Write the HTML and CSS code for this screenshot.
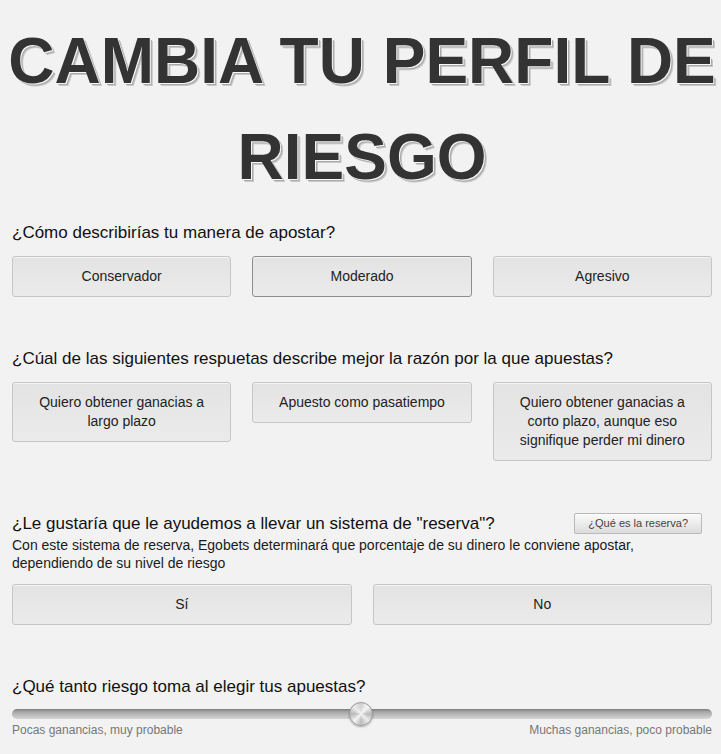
FILE: index.html
```html
<!DOCTYPE html>
<html lang="es">
  <head>
    <meta charset="UTF-8" />
    <meta name="viewport" content="width=device-width, initial-scale=1.0" />
    <title>Cambia tu perfil de riesgo</title>
    <link rel="stylesheet" href="styles.css">
  </head>
  <body>
    <div class="page">
      <h1>CAMBIA TU PERFIL DE RIESGO</h1>

      <!-- manera de apostar -->
      <div class="question">
        <h2>¿Cómo describirías tu manera de apostar?</h2>
        <div class="options">
          <button class="option">Conservador</button>
          <button class="option selected">Moderado</button>
          <button class="option">Agresivo</button>
        </div>
      </div>

      <!-- razón -->
      <div class="question">
        <h2>¿Cúal de las siguientes respuetas describe mejor la razón por la que apuestas?</h2>
        <div class="options">
          <button class="option">Quiero obtener ganacias a largo plazo</button>
          <button class="option">Apuesto como pasatiempo</button>
          <button class="option">Quiero obtener ganacias a corto plazo, aunque eso signifique perder mi dinero</button>
        </div>
      </div>

      <!-- reserva -->
      <div class="question">
        <div class="question-head">
          <h2>¿Le gustaría que le ayudemos a llevar un sistema de "reserva"?</h2>
          <button class="help-button">¿Qué es la reserva?</button>
        </div>
        <p class="note">Con este sistema de reserva, Egobets determinará que porcentaje de su dinero le conviene apostar, dependiendo de su nivel de riesgo</p>
        <div class="options two">
          <button class="option">Sí</button>
          <button class="option">No</button>
        </div>
      </div>

      <!-- riesgo -->
      <div class="question last">
        <h2>¿Qué tanto riesgo toma al elegir tus apuestas?</h2>
        <div class="slider">
          <div class="track"></div>
          <div class="thumb"></div>
        </div>
        <div class="scale-labels">
          <span>Pocas ganancias, muy probable</span>
          <span>Muchas ganancias, poco probable</span>
        </div>
      </div>
    </div>
  </body>
</html>
```

FILE: styles.css
```css
body {
  margin: 0;
  background: #f2f2f2;
  font-family: 'Liberation Sans', Arial, sans-serif;
  color: #1a1a1a;
}
.page {
  padding: 13px 9px 20px 12px;
}
h1 {
  margin: 0 -8px 18px;
  font-size: 64px;
  line-height: 96px;
  font-weight: bold;
  text-align: center;
  color: #333;
  text-shadow: 1px 1px 0 #f6f6f6, 2px 2px 0 #aaa, 3px 3px 0 #c8c8c8;
}
.question {
  margin-bottom: 52px;
}
.question h2 {
  margin: 0 0 13px;
  font-size: 17px;
  font-weight: normal;
  line-height: 20px;
  color: #111;
}
.question.last h2 {
  margin-bottom: 5px;
}
.options {
  display: grid;
  grid-template-columns: repeat(3, 1fr);
  gap: 21px;
  align-items: start;
}
.options.two {
  grid-template-columns: 1fr 1fr;
}
.option {
  font-family: 'Liberation Sans', Arial, sans-serif;
  font-size: 14px;
  line-height: 19px;
  padding: 10px 15px;
  border: 1px solid #c6c6c6;
  border-radius: 3px;
  background: linear-gradient(#e3e3e3, #ebebeb);
  box-shadow: inset 0 1px 0 #f4f4f4;
  color: #222;
  cursor: pointer;
}
.option.selected {
  border-color: #8e8e8e;
}
.question-head {
  display: flex;
  justify-content: space-between;
  align-items: center;
}
.question-head h2 {
  margin: 0;
}
.help-button {
  margin-right: 10px;
  padding: 3px 13px;
  font-family: 'Liberation Sans', Arial, sans-serif;
  font-size: 11px;
  line-height: 13px;
  color: #444;
  border: 1px solid #b9b9b9;
  border-radius: 2px;
  background: linear-gradient(#fbfbfb, #dcdcdc);
  cursor: pointer;
}
.note {
  margin: 2px 0 12px;
  font-size: 14px;
  line-height: 18px;
  color: #1a1a1a;
}
.slider {
  position: relative;
  display: flex;
  align-items: center;
  height: 24px;
}
.track {
  flex: 1;
  height: 10px;
  border-radius: 5px;
  background: linear-gradient(#7e7e7e, #a8a8a8 30%, #c2c2c2 70%, #d6d6d6);
}
.thumb {
  position: absolute;
  left: 50%;
  top: 0;
  width: 22px;
  height: 22px;
  margin-left: -13px;
  border-radius: 50%;
  border: 1px solid #9a9a9a;
  background:
    radial-gradient(circle, rgba(255,255,255,0.5) 0, rgba(255,255,255,0) 40%),
    conic-gradient(#d2d2d2, #f6f6f6 12%, #b9b9b9 25%, #ececec 37%, #bcbcbc 50%, #f4f4f4 62%, #b8b8b8 75%, #ebebeb 87%, #d2d2d2);
  box-shadow: 0 1px 2px rgba(0, 0, 0, 0.3);
}
.scale-labels {
  display: flex;
  justify-content: space-between;
  margin-top: -3px;
  font-size: 12px;
  line-height: 14px;
  color: #777;
}
```
